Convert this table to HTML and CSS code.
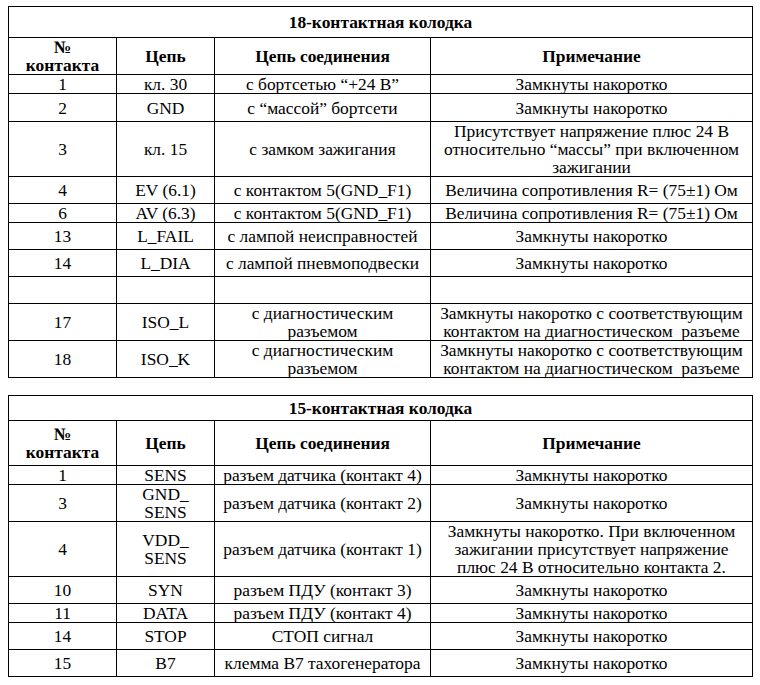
FILE: index.html
```html
<!DOCTYPE html>
<html lang="ru">
<head>
<meta charset="utf-8">
<title>Колодки</title>
<link rel="stylesheet" href="styles.css">
</head>
<body>
<div class="page">
<table class="pins">
  <colgroup><col class="c1"><col class="c2"><col class="c3"><col class="c4"></colgroup>
  <tr class="h31"><th colspan="4" class="title">18-контактная колодка</th></tr>
  <tr class="h37"><th>№<br>контакта</th><th>Цепь</th><th>Цепь соединения</th><th>Примечание</th></tr>
  <tr class="h19"><td>1</td><td>кл. 30</td><td>с бортсетью “+24 В”</td><td>Замкнуты накоротко</td></tr>
  <tr class="h28"><td>2</td><td>GND</td><td>с “массой” бортсети</td><td>Замкнуты накоротко</td></tr>
  <tr class="h54"><td>3</td><td>кл. 15</td><td>с замком зажигания</td><td>Присутствует напряжение плюс 24 В<br>относительно “массы” при включенном<br>зажигании</td></tr>
  <tr class="h27"><td>4</td><td>EV (6.1)</td><td>с контактом 5(GND_F1)</td><td>Величина сопротивления R= (75±1) Ом</td></tr>
  <tr class="h19"><td>6</td><td>AV (6.3)</td><td>с контактом 5(GND_F1)</td><td>Величина сопротивления R= (75±1) Ом</td></tr>
  <tr class="h27"><td>13</td><td>L_FAIL</td><td>с лампой неисправностей</td><td>Замкнуты накоротко</td></tr>
  <tr class="h27"><td>14</td><td>L_DIA</td><td>с лампой пневмоподвески</td><td>Замкнуты накоротко</td></tr>
  <tr class="h27"><td></td><td></td><td></td><td></td></tr>
  <tr class="h37"><td>17</td><td>ISO_L</td><td>с диагностическим<br>разъемом</td><td>Замкнуты накоротко с соответствующим<br>контактом на диагностическом&nbsp; разъеме</td></tr>
  <tr class="h37"><td>18</td><td>ISO_K</td><td>с диагностическим<br>разъемом</td><td>Замкнуты накоротко с соответствующим<br>контактом на диагностическом&nbsp; разъеме</td></tr>
</table>

<table class="pins second">
  <colgroup><col class="c1"><col class="c2"><col class="c3"><col class="c4"></colgroup>
  <tr class="h25"><th colspan="4" class="title">15-контактная колодка</th></tr>
  <tr class="h45"><th>№<br>контакта</th><th>Цепь</th><th>Цепь соединения</th><th>Примечание</th></tr>
  <tr class="h19"><td>1</td><td>SENS</td><td>разъем датчика (контакт 4)</td><td>Замкнуты накоротко</td></tr>
  <tr class="h36"><td>3</td><td>GND_<br>SENS</td><td>разъем датчика (контакт 2)</td><td>Замкнуты накоротко</td></tr>
  <tr class="h55"><td>4</td><td>VDD_<br>SENS</td><td>разъем датчика (контакт 1)</td><td>Замкнуты накоротко. При включенном<br>зажигании присутствует напряжение<br>плюс 24 В относительно контакта 2.</td></tr>
  <tr class="h27"><td>10</td><td>SYN</td><td>разъем ПДУ (контакт 3)</td><td>Замкнуты накоротко</td></tr>
  <tr class="h19"><td>11</td><td>DATA</td><td>разъем ПДУ (контакт 4)</td><td>Замкнуты накоротко</td></tr>
  <tr class="h27"><td>14</td><td>STOP</td><td>СТОП сигнал</td><td>Замкнуты накоротко</td></tr>
  <tr class="h27"><td>15</td><td>B7</td><td>клемма В7 тахогенератора</td><td>Замкнуты накоротко</td></tr>
</table>
</div>
</body>
</html>
```

FILE: styles.css
```css
html, body {
  margin: 0;
  padding: 0;
  background: #ffffff;
}

.page {
  padding: 6px 0 0 8px;
  font-family: "Liberation Serif", "Times New Roman", serif;
  font-size: 17.4px;
  color: #000000;
}

.pins {
  border-collapse: collapse;
  table-layout: fixed;
  width: 745px;
}

.second {
  margin-top: 17px;
}

.c1 { width: 108px; }
.c2 { width: 98px; }
.c3 { width: 216px; }
.c4 { width: 322px; }

.pins th,
.pins td {
  border: 1px solid #000000;
  padding: 0 2px;
  text-align: center;
  vertical-align: middle;
  line-height: 18px;
  font-weight: normal;
  white-space: nowrap;
}

.pins th {
  font-weight: bold;
}

.h19 { height: 19px; }
.h25 { height: 25px; }
.h27 { height: 27px; }
.h28 { height: 28px; }
.h31 { height: 31px; }
.h36 { height: 36px; }
.h37 { height: 37px; }
.h45 { height: 45px; }
.h54 { height: 54px; }
.h55 { height: 55px; }
```
